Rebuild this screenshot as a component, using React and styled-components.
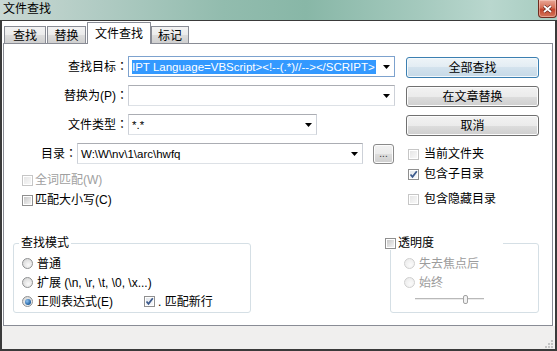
import styled, { createGlobalStyle } from "styled-components";

const GlobalStyle = createGlobalStyle`
  html, body { margin: 0; padding: 0; background: #fff; }
  body {
    font-family: "Liberation Sans", "Noto Sans CJK SC", sans-serif;
    font-size: 12px;
    color: #000;
  }
  * { box-sizing: border-box; }
`;

const Window = styled.div`
  width: 557px;
  height: 351px;
  display: flex;
  flex-direction: column;
  overflow: hidden;
`;

const TitleBar = styled.div`
  height: 20px;
  flex: none;
  display: flex;
  align-items: flex-start;
  justify-content: space-between;
  padding-left: 3px;
  background: linear-gradient(
    to right,
    #c9d8d3 0%,
    #b0cbc3 18%,
    #92bcae 40%,
    #88b7a7 55%,
    #a4c9bd 75%,
    #b9d7ce 88%,
    #a5cbbf 100%
  );
`;

const Title = styled.span`
  line-height: 19px;
  font-size: 12px;
`;

const CloseBtn = styled.div`
  width: 19px;
  height: 18px;
  border: 1px solid #6e2c20;
  border-top: none;
  border-radius: 0 0 4px 4px;
  background: linear-gradient(#e9a796 0%, #d66f56 45%, #c2442b 55%, #d4775c 100%);
  box-shadow: inset 0 0 0 1px rgba(255, 220, 210, 0.45);
  display: flex;
  align-items: center;
  justify-content: center;
`;

const Frame = styled.div`
  flex: 1;
  display: flex;
  flex-direction: column;
  border: 2px solid #3a3a3a;
  border-top: 1px solid #3a3a3a;
  background: #fff;
`;

const TabStrip = styled.div`
  height: 23px;
  flex: none;
  display: flex;
  align-items: flex-end;
  padding: 1px 0 0 2px;
  margin-bottom: -1px;
  position: relative;
  z-index: 1;
`;

const Tab = styled.div`
  width: ${(p) => p.$w}px;
  height: ${(p) => (p.$active ? 22 : 18)}px;
  margin-left: ${(p) => p.$ml || 0}px;
  border: 1px solid #898c95;
  border-bottom: ${(p) => (p.$active ? "none" : "1px solid #898c95")};
  background: ${(p) =>
    p.$active
      ? "#fff"
      : "linear-gradient(#f3f3f3 0%, #ebebeb 50%, #dddddd 50%, #cfcfcf 100%)"};
  display: flex;
  align-items: center;
  justify-content: center;
  line-height: 14px;
  padding-top: ${(p) => (p.$active ? 0 : 1)}px;
`;

const Panel = styled.div`
  height: 283px;
  flex: none;
  margin: 0 2px 0 1px;
  border: 1px solid #898c95;
  display: flex;
  flex-direction: column;
  padding: 12px 0 12px 0;
`;

const Top = styled.div`
  display: flex;
`;

const LeftCol = styled.div`
  width: 402px;
  display: flex;
  flex-direction: column;
`;

const RightCol = styled.div`
  width: 133px;
  display: flex;
  flex-direction: column;
  padding-top: 1px;
`;

const FieldRow = styled.div`
  display: flex;
  align-items: center;
  height: 21px;
  margin-top: ${(p) => p.$mt || 0}px;
`;

const Label = styled.div`
  width: ${(p) => p.$w}px;
  flex: none;
  text-align: right;
  line-height: 14px;
  white-space: nowrap;
`;

// the fullwidth colon sits centred in its cell, as in the traditional CJK forms
const Colon = styled.span`
  font-family: "Noto Sans CJK TC", sans-serif;
`;

const Combo = styled.div`
  width: ${(p) => p.$w}px;
  height: 21px;
  flex: none;
  display: flex;
  align-items: center;
  border: 1px solid ${(p) => (p.$focus ? "#7da2ce" : "#abadb3")};
  border-left-color: ${(p) => (p.$focus ? "#7da2ce" : "#cdd1d8")};
  border-right-color: ${(p) => (p.$focus ? "#7da2ce" : "#cdd1d8")};
  border-bottom-color: ${(p) => (p.$focus ? "#7da2ce" : "#dde1e6")};
  background: #fff;
  padding-left: 2px;
`;

const ComboText = styled.div`
  flex: 1;
  min-width: 0;
  overflow: hidden;
  white-space: nowrap;
  font-size: 11.5px;
  line-height: 14px;
  padding-left: 1px;
`;

const Selected = styled.span`
  background: #3399ff;
  color: #fff;
  padding: 0 1px 0 0;
  display: inline-block;
`;

const ArrowBox = styled.div`
  width: 15px;
  height: 100%;
  flex: none;
  display: flex;
  align-items: center;
  justify-content: center;
`;

const SmallBtn = styled.div`
  width: 21px;
  height: 20px;
  margin-left: 10px;
  border: 1px solid #8a8a8a;
  border-radius: 3px;
  background: linear-gradient(#f2f2f2 0%, #ebebeb 50%, #dddddd 50%, #cfcfcf 100%);
  box-shadow: inset 0 0 0 1px #fcfcfc;
  font-size: 10px;
  line-height: 10px;
  display: flex;
  align-items: flex-end;
  justify-content: center;
  padding-bottom: 4px;
  color: #333;
`;

const Button = styled.div`
  height: 21px;
  margin-top: ${(p) => p.$mt || 0}px;
  border: 1px solid ${(p) => (p.$default ? "#3c7fb1" : "#707070")};
  border-radius: 3px;
  background: ${(p) =>
    p.$default
      ? "linear-gradient(#eef4f8 0%, #e2ecf3 50%, #d3e2ed 50%, #c6d9e7 100%)"
      : "linear-gradient(#f2f2f2 0%, #ebebeb 50%, #dddddd 50%, #cfcfcf 100%)"};
  box-shadow: inset 0 0 0 1px ${(p) => (p.$default ? "#f4f9fc" : "#fcfcfc")};
  display: flex;
  align-items: center;
  justify-content: center;
  line-height: 14px;
`;

const CheckRow = styled.div`
  display: flex;
  align-items: center;
  gap: ${(p) => p.$gap ?? 2}px;
  height: 14px;
  margin-top: ${(p) => p.$mt || 0}px;
  margin-left: ${(p) => p.$ml || 0}px;
  line-height: 14px;
  white-space: nowrap;
  color: ${(p) => (p.$disabled ? "#a0a0a0" : "#000")};
  ${(p) => (p.$w ? `width: ${p.$w}px;` : "")}
`;

const Box = styled.span`
  width: 11px;
  height: 11px;
  flex: none;
  position: relative;
  border: 1px solid ${(p) => (p.$disabled ? "#c6c6c6" : "#8f8f8f")};
  background: #fff;
  &::before {
    content: "";
    position: absolute;
    inset: 1px;
    background: ${(p) =>
      p.$checked
        ? "linear-gradient(135deg, #e3e7ec, #f7f8fa)"
        : p.$disabled
        ? "linear-gradient(135deg, #e6e6e6, #f8f8f8)"
        : "linear-gradient(135deg, #c8c8c8, #f4f4f4)"};
  }
  svg {
    position: absolute;
    left: 0;
    top: 0;
  }
`;

const Radio = styled.span`
  width: 11px;
  height: 11px;
  flex: none;
  border-radius: 50%;
  position: relative;
  border: 1px solid ${(p) => (p.$disabled ? "#cfcfcf" : "#8e9091")};
  background: ${(p) =>
    p.$disabled
      ? "radial-gradient(circle at 60% 65%, #fbfbfb, #e8e8e8)"
      : "radial-gradient(circle at 60% 65%, #fafafa, #cfcfcf)"};
  &::after {
    content: "";
    display: ${(p) => (p.$checked ? "block" : "none")};
    position: absolute;
    left: 1.5px;
    top: 1.5px;
    width: 6px;
    height: 6px;
    border-radius: 50%;
    background: radial-gradient(circle at 35% 35%, #8fc2f2, #1f5f9f 70%);
  }
`;

const Bottom = styled.div`
  display: flex;
  justify-content: space-between;
  margin-top: auto;
  padding: 0 13px 0 9px;
`;

const Group = styled.fieldset`
  margin: 0;
  padding: 0;
  min-width: 0;
  width: ${(p) => p.$w}px;
  height: 77px;
  border: 1px solid #d5dfe5;
  border-radius: 3px;
`;

const Legend = styled.legend`
  margin-left: ${(p) => p.$ml}px;
  padding: ${(p) => (p.$w ? 0 : "0 2px")};
  height: 14px;
  line-height: 14px;
  ${(p) => (p.$w ? `width: ${p.$w}px;` : "")}
`;

const LegendInner = styled.span`
  display: flex;
  align-items: center;
  gap: 2px;
  height: 14px;
`;

const GroupBody = styled.div`
  display: flex;
  flex-direction: column;
  padding: 4px 0 0 ${(p) => p.$pl}px;
`;

const OptRow = styled.div`
  display: flex;
  align-items: center;
  height: 19px;
`;

const Opt = styled.div`
  display: flex;
  align-items: center;
  gap: 4px;
  line-height: 14px;
  white-space: nowrap;
  color: ${(p) => (p.$disabled ? "#9c9c9c" : "#000")};
  ${(p) => (p.$w ? `width: ${p.$w}px;` : "")}
`;

const Slider = styled.div`
  width: 69px;
  height: 14px;
  margin-left: 11px;
  display: flex;
  align-items: center;
`;

const Track = styled.div`
  height: 2px;
  flex: ${(p) => (p.$w ? `0 0 ${p.$w}px` : 1)};
  border-top: 1px solid #b9b9b9;
  background: #ececec;
`;

const Thumb = styled.div`
  width: 5px;
  height: 9px;
  flex: none;
  border: 1px solid #a3a3a3;
  border-radius: 2px;
  background: #f2f2f2;
`;

const StatusBar = styled.div`
  height: 23px;
  flex: none;
  background: #f0efee;
  display: flex;
  justify-content: flex-end;
  align-items: flex-end;
  padding: 0 2px 1px 0;
`;

const Arrow = () => (
  <svg width="7" height="4" viewBox="0 0 7 4">
    <path d="M0 0h7L3.5 4z" fill="#000" />
  </svg>
);

const Check = ({ checked, disabled }) => (
  <Box $checked={checked} $disabled={disabled}>
    {checked && (
      <svg width="9" height="9" viewBox="0 0 9 9">
        <path d="M1.5 4.5l2 2.3L7.8 1.2" fill="none" stroke="#3c5a8c" strokeWidth="1.7" />
      </svg>
    )}
  </Box>
);

const Grip = () => (
  <svg width="10" height="10" viewBox="0 0 10 10">
    {[
      [8, 2],
      [5, 5],
      [8, 5],
      [2, 8],
      [5, 8],
      [8, 8],
    ].map(([x, y]) => (
      <rect key={`${x}-${y}`} x={x} y={y} width="2" height="2" fill="#c4c4c4" />
    ))}
  </svg>
);

export default function App() {
  return (
    <Window>
      <GlobalStyle />
      <TitleBar>
        <Title>文件查找</Title>
        <CloseBtn>
          <svg width="9" height="8" viewBox="0 0 9 8">
            <path d="M1 1l7 6M8 1L1 7" stroke="#5a2018" strokeWidth="3" />
            <path d="M1 1l7 6M8 1L1 7" stroke="#fff" strokeWidth="1.8" />
          </svg>
        </CloseBtn>
      </TitleBar>
      <Frame>
        <TabStrip>
          <Tab $w={42}>查找</Tab>
          <Tab $w={39} $ml={1}>替换</Tab>
          <Tab $w={64} $ml={1} $active>文件查找</Tab>
          <Tab $w={38}>标记</Tab>
        </TabStrip>
        <Panel>
          <Top>
            <LeftCol>
              <FieldRow>
                <Label $w={124}>查找目标<Colon>：</Colon></Label>
                <Combo $w={267} $focus>
                  <ComboText>
                    <Selected>IPT Language=VBScript&gt;&lt;!--(.*)//--&gt;&lt;/SCRIPT&gt;</Selected>
                  </ComboText>
                  <ArrowBox><Arrow /></ArrowBox>
                </Combo>
              </FieldRow>
              <FieldRow $mt={8}>
                <Label $w={124}>替换为(P)<Colon>：</Colon></Label>
                <Combo $w={267}>
                  <ComboText />
                  <ArrowBox><Arrow /></ArrowBox>
                </Combo>
              </FieldRow>
              <FieldRow $mt={8}>
                <Label $w={124}>文件类型<Colon>：</Colon></Label>
                <Combo $w={189}>
                  <ComboText>*.*</ComboText>
                  <ArrowBox><Arrow /></ArrowBox>
                </Combo>
              </FieldRow>
              <FieldRow $mt={8}>
                <Label $w={73}>目录<Colon>：</Colon></Label>
                <Combo $w={286}>
                  <ComboText>W:\W\nv\1\arc\hwfq</ComboText>
                  <ArrowBox><Arrow /></ArrowBox>
                </Combo>
                <SmallBtn>...</SmallBtn>
              </FieldRow>
              <CheckRow $mt={9} $ml={18} $disabled>
                <Check disabled />
                全词匹配(W)
              </CheckRow>
              <CheckRow $mt={6} $ml={18}>
                <Check />
                匹配大小写(C)
              </CheckRow>
            </LeftCol>
            <RightCol>
              <Button $default>全部查找</Button>
              <Button $mt={8}>在文章替换</Button>
              <Button $mt={8}>取消</Button>
              <CheckRow $mt={11} $ml={2} $gap={5}>
                <Check disabled />
                当前文件夹
              </CheckRow>
              <CheckRow $mt={6} $ml={2} $gap={5}>
                <Check checked />
                包含子目录
              </CheckRow>
              <CheckRow $mt={11} $ml={2} $gap={5}>
                <Check disabled />
                包含隐藏目录
              </CheckRow>
            </RightCol>
          </Top>
          <Bottom>
            <Group $w={238}>
              <Legend $ml={5}>查找模式</Legend>
              <GroupBody $pl={8}>
                <OptRow>
                  <Opt><Radio />普通</Opt>
                </OptRow>
                <OptRow>
                  <Opt><Radio />扩展 (\n, \r, \t, \0, \x...)</Opt>
                </OptRow>
                <OptRow>
                  <Opt $w={122}><Radio $checked />正则表达式(E)</Opt>
                  <CheckRow $gap={3}>
                    <Check checked />
                    . 匹配新行
                  </CheckRow>
                </OptRow>
              </GroupBody>
            </Group>
            <Group $w={149}>
              <Legend $ml={-6} $w={118}>
                <LegendInner>
                  <Check />
                  透明度
                </LegendInner>
              </Legend>
              <GroupBody $pl={13}>
                <OptRow>
                  <Opt $disabled><Radio $disabled />失去焦点后</Opt>
                </OptRow>
                <OptRow>
                  <Opt $disabled><Radio $disabled />始终</Opt>
                </OptRow>
                <Slider>
                  <Track $w={48} />
                  <Thumb />
                  <Track />
                </Slider>
              </GroupBody>
            </Group>
          </Bottom>
        </Panel>
        <StatusBar>
          <Grip />
        </StatusBar>
      </Frame>
    </Window>
  );
}
